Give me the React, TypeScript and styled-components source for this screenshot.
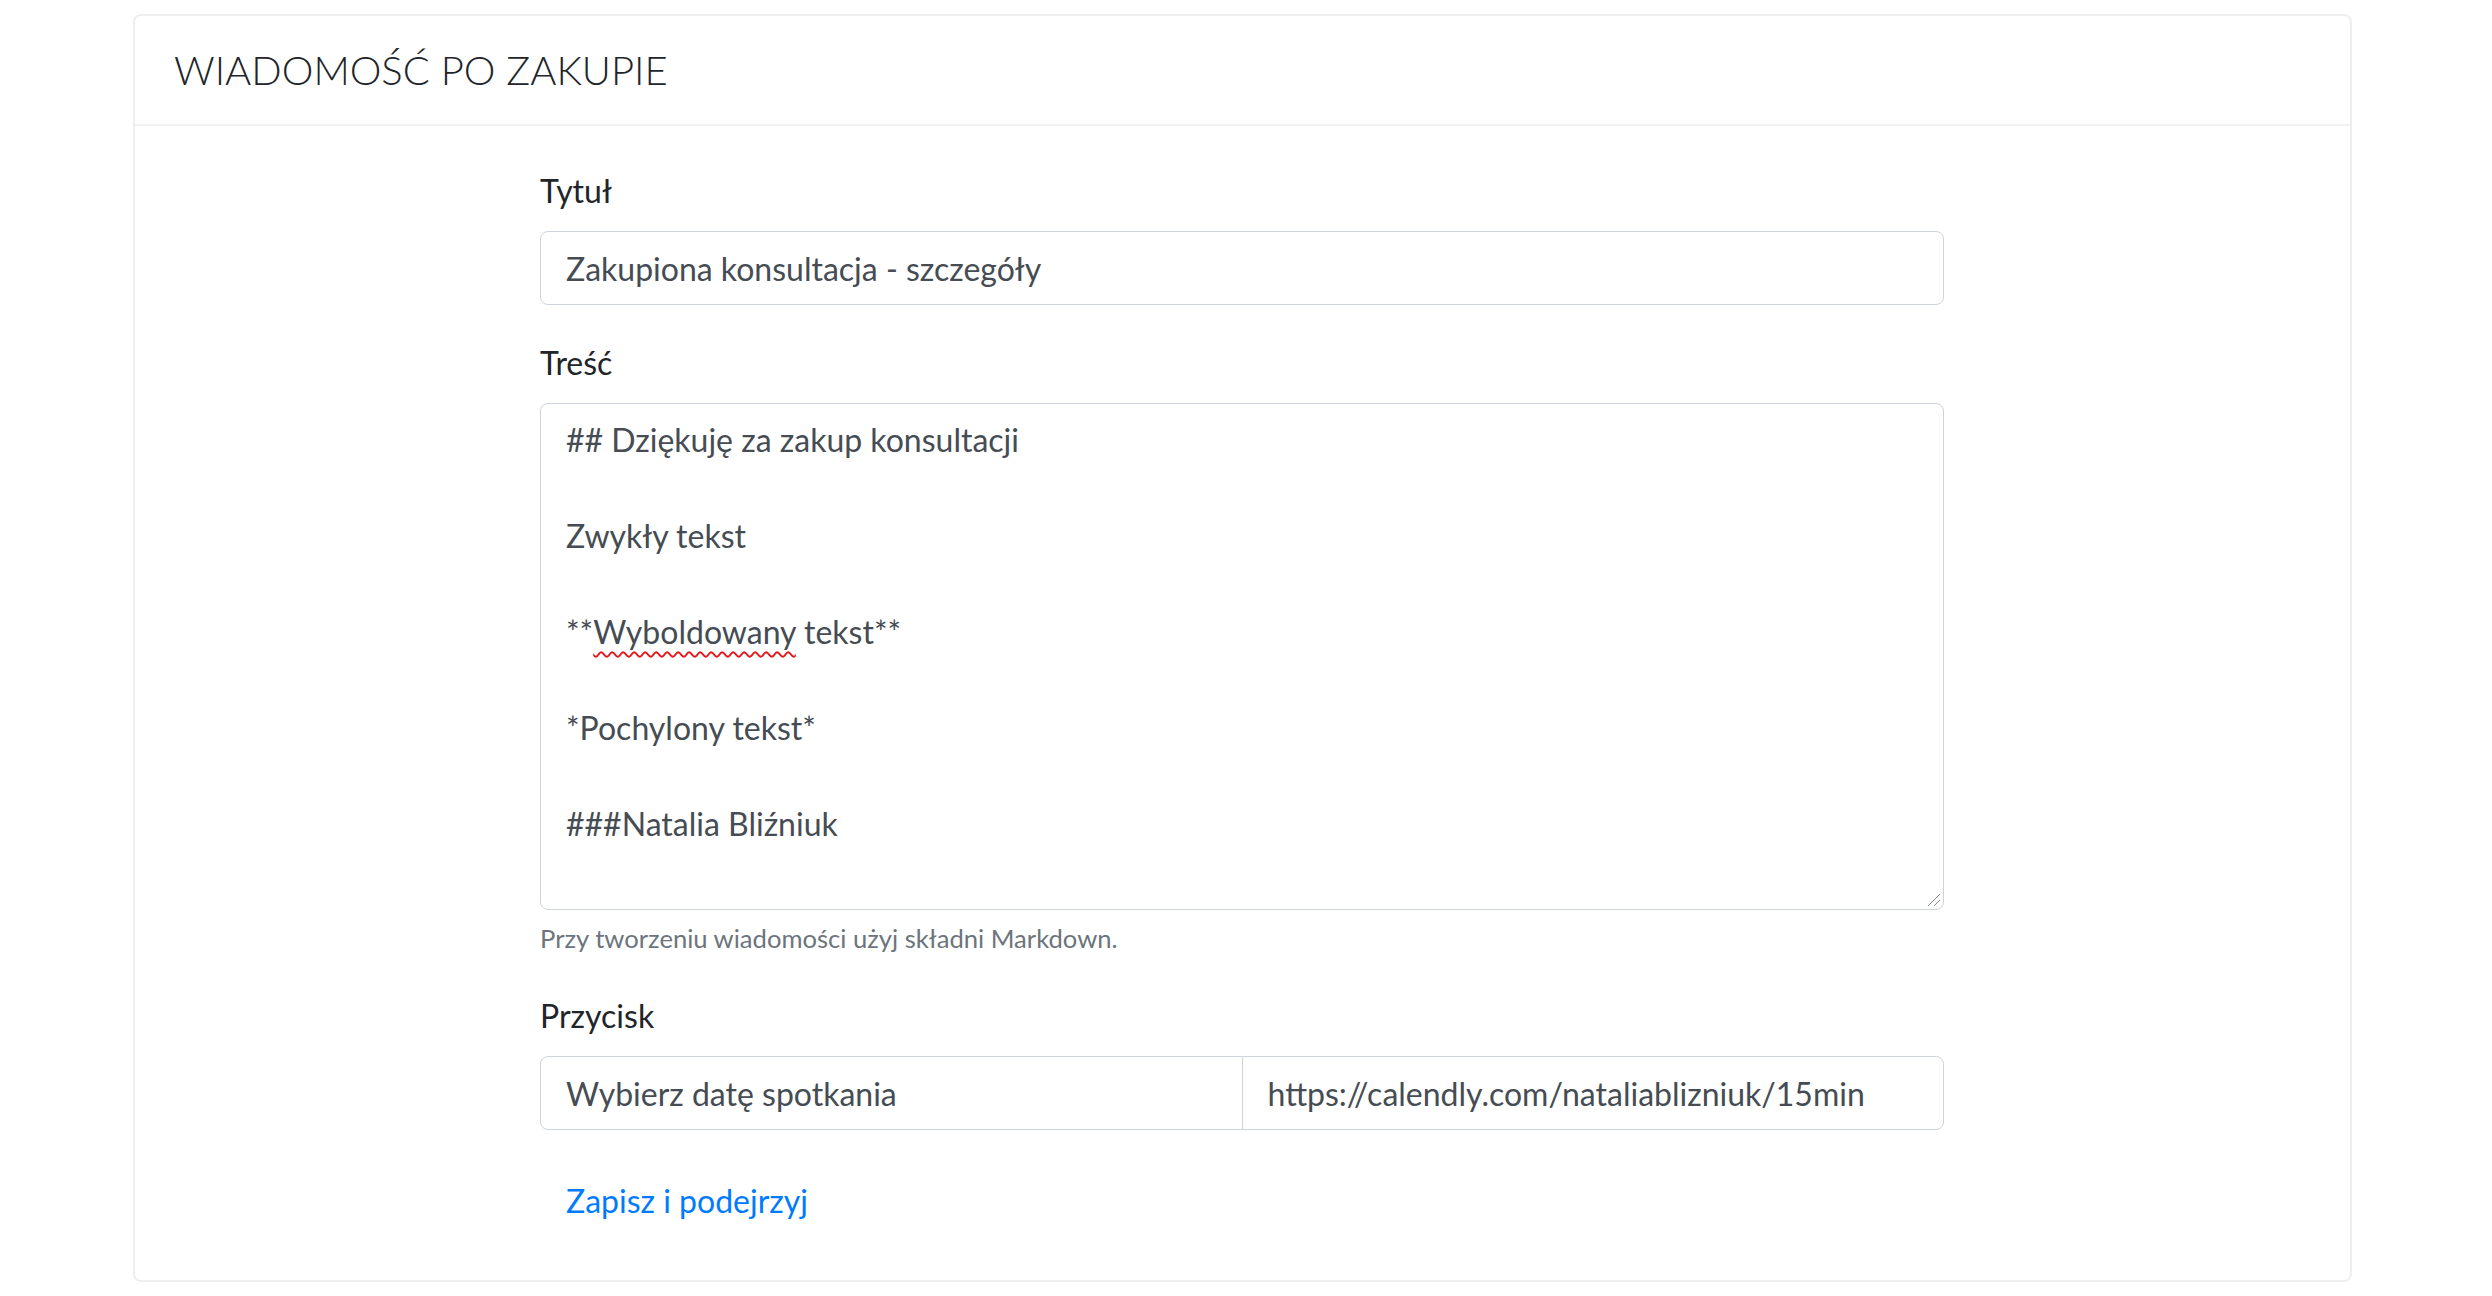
import React from "react";
import styled, { createGlobalStyle } from "styled-components";

const GlobalStyle = createGlobalStyle`
  html, body {
    margin: 0;
    padding: 0;
    background: #ffffff;
  }
  body {
    font-family: Lato, "Noto Sans", "Liberation Sans", sans-serif;
    color: #212529;
  }
  * { box-sizing: border-box; }
`;

const Card = styled.section`
  margin: 14px 0 0 133px;
  width: 2219px;
  border: 2px solid #eeeeee;
  border-radius: 8px;
  background: #ffffff;
`;

const CardHeader = styled.header`
  height: 110px;
  display: flex;
  align-items: center;
  padding: 0 39px;
  border-bottom: 2px solid #f2f2f2;
`;

const HeaderTitle = styled.h2`
  margin: 0;
  font-family: Lato, "Noto Sans", sans-serif;
  font-weight: 300;
  font-size: 40px;
  line-height: 48px;
  color: #212529;
  text-transform: uppercase;
`;

const CardBody = styled.div`
  padding: 41px 0 42px 405px;
`;

const Form = styled.form`
  width: 1404px;
`;

const FormGroup = styled.div`
  margin-bottom: 34px;
`;

const Label = styled.label`
  display: block;
  font-size: 32px;
  line-height: 48px;
  margin-bottom: 16px;
  color: #212529;
`;

const TextInput = styled.input<{ $joined?: "left" | "right" }>`
  display: block;
  width: 100%;
  height: 74px;
  padding: 12px 24px 12px 25px;
  font-family: Lato, "Noto Sans", sans-serif;
  font-size: 32px;
  line-height: 48px;
  color: #454c53;
  background: #ffffff;
  border: 1px solid #ced4da;
  border-radius: ${(p) =>
    p.$joined === "left" ? "8px 0 0 8px" : p.$joined === "right" ? "0 8px 8px 0" : "8px"};
  margin-left: ${(p) => (p.$joined === "right" ? "-1px" : "0")};
  outline: none;
`;

const TextArea = styled.div`
  position: relative;
  width: 100%;
  height: 507px;
  padding: 12px 24px 12px 25px;
  font-size: 32px;
  line-height: 48px;
  color: #454c53;
  white-space: pre-wrap;
  border: 1px solid #ced4da;
  border-radius: 8px;
  background: #ffffff;
`;

const Misspelled = styled.span`
  text-decoration: underline wavy #e4161b;
  text-decoration-thickness: 1.5px;
  text-underline-offset: 7px;
`;

const ResizeGrip = styled.svg`
  position: absolute;
  right: 2px;
  bottom: 2px;
  width: 14px;
  height: 14px;
`;

const HelpText = styled.small`
  display: block;
  margin-top: 8px;
  font-size: 25.6px;
  line-height: 40px;
  color: #6c757d;
`;

const InputGroup = styled.div`
  display: flex;
  width: 100%;
`;

const LinkButton = styled.button`
  display: inline-block;
  padding: 12px 24px 12px 25px;
  font-family: Lato, "Noto Sans", sans-serif;
  font-size: 32px;
  line-height: 48px;
  color: #007bff;
  background: transparent;
  border: 1px solid transparent;
  border-radius: 8px;
  cursor: pointer;
`;

export default function App() {
  return (
    <>
      <GlobalStyle />
      <Card>
        <CardHeader>
          <HeaderTitle>Wiadomość po zakupie</HeaderTitle>
        </CardHeader>
        <CardBody>
          <Form onSubmit={(e) => e.preventDefault()}>
            <FormGroup>
              <Label htmlFor="title">Tytuł</Label>
              <TextInput id="title" readOnly defaultValue="Zakupiona konsultacja - szczegóły" />
            </FormGroup>
            <FormGroup>
              <Label>Treść</Label>
              <TextArea role="textbox" aria-multiline="true">
                {"## Dziękuję za zakup konsultacji\n\nZwykły tekst\n\n**"}
                <Misspelled>Wyboldowany</Misspelled>
                {" tekst**\n\n*Pochylony tekst*\n\n###Natalia Bliźniuk"}
                <ResizeGrip viewBox="0 0 14 14">
                  <line x1="1" y1="13" x2="13" y2="1" stroke="#8a8a8a" strokeWidth="1" />
                  <line x1="7" y1="13" x2="13" y2="7" stroke="#8a8a8a" strokeWidth="1" />
                </ResizeGrip>
              </TextArea>
              <HelpText>Przy tworzeniu wiadomości użyj składni Markdown.</HelpText>
            </FormGroup>
            <FormGroup>
              <Label>Przycisk</Label>
              <InputGroup>
                <TextInput $joined="left" readOnly defaultValue="Wybierz datę spotkania" />
                <TextInput
                  $joined="right"
                  readOnly
                  defaultValue="https://calendly.com/nataliablizniuk/15min"
                />
              </InputGroup>
            </FormGroup>
            <LinkButton type="submit">Zapisz i podejrzyj</LinkButton>
          </Form>
        </CardBody>
      </Card>
    </>
  );
}
